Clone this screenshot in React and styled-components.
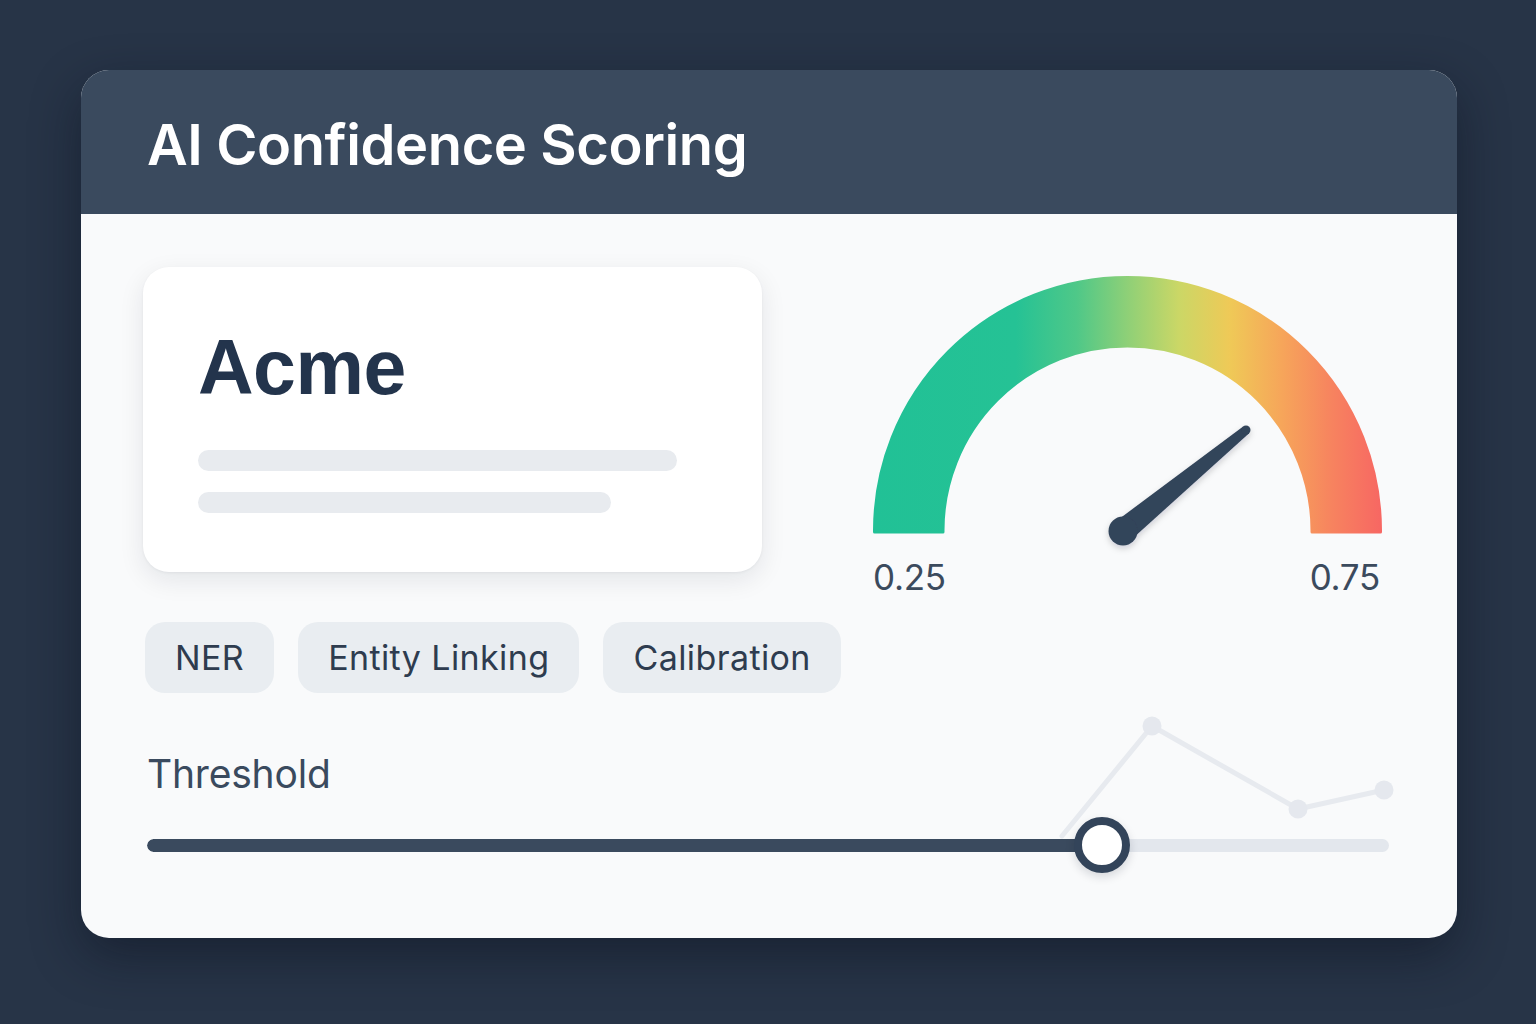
import React from "react";
import styled, { createGlobalStyle } from "styled-components";

const Global = createGlobalStyle`
  html, body { margin: 0; padding: 0; background: #273447; }
  body { font-family: Inter, "Noto Sans", "Liberation Sans", sans-serif; }
  * { box-sizing: border-box; }
`;

const Page = styled.div`
  width: 1536px;
  height: 1024px;
  padding: 70px 0 0 81px;
  background: #273447;
`;

const Card = styled.div`
  width: 1376px;
  height: 868px;
  border-radius: 28px;
  overflow: hidden;
  background: #f9fafb;
  box-shadow: 0 18px 50px rgba(8, 14, 26, 0.45);
  display: flex;
  flex-direction: column;
`;

const Header = styled.div`
  height: 144px;
  flex: 0 0 144px;
  background: #3a4a5e;
  display: flex;
  align-items: center;
  padding-left: 66px;
`;

const Title = styled.h1`
  margin: 0;
  font-family: Inter, sans-serif;
  font-weight: 600;
  font-size: 56px;
  letter-spacing: -0.4px;
  color: #ffffff;
  padding-top: 5px;
  white-space: nowrap;
`;

const Body = styled.div`
  flex: 1;
  padding: 53px 66px 0 62px;
`;

const TopRow = styled.div`
  display: grid;
  grid-template-columns: 619px 510px;
  column-gap: 111px;
`;

const LeftCol = styled.div`
  display: flex;
  flex-direction: column;
  min-width: 0;
`;

const EntityCard = styled.div`
  height: 305px;
  background: #ffffff;
  border-radius: 26px;
  box-shadow: 0 8px 26px rgba(15, 23, 42, 0.09), 0 1px 3px rgba(15, 23, 42, 0.05);
  padding: 56px 0 0 55px;
`;

const EntityName = styled.div`
  font-family: "Liberation Sans", Arial, sans-serif;
  font-weight: 700;
  font-size: 77px;
  line-height: 88px;
  color: #23344c;
  letter-spacing: -0.5px;
`;

const SkeletonLine = styled.div`
  height: 21px;
  border-radius: 11px;
  background: #e8ebef;
  width: ${(p) => p.$w}px;
  margin-top: ${(p) => p.$mt}px;
`;

const Chips = styled.div`
  display: flex;
  gap: 24px;
  margin-top: 50px;
  padding-left: 2px;
  width: max-content;
`;

const Chip = styled.div`
  flex: 0 0 auto;
  white-space: nowrap;
  height: 71px;
  padding: 0 30px;
  border-radius: 20px;
  background: #e9edf1;
  display: flex;
  align-items: center;
  font-family: Inter, sans-serif;
  font-size: 34px;
  font-weight: 400;
  color: #2e3c4f;
  letter-spacing: 0.4px;
`;

const GaugeCol = styled.div`
  padding-top: 9px;
  display: flex;
  flex-direction: column;
`;

const GaugeSvg = styled.svg`
  display: block;
  overflow: visible;
`;

const GaugeLabels = styled.div`
  display: flex;
  justify-content: space-between;
  margin-top: 23px;
  padding-right: 3px;
`;

const GaugeLabel = styled.span`
  font-family: Inter, sans-serif;
  font-size: 35px;
  line-height: 40px;
  color: #3b4a5d;
  letter-spacing: -0.3px;
`;

const ThresholdSection = styled.div`
  position: relative;
  margin: 59px 0 0 4px;
  width: 1242px;
`;

const ThresholdLabel = styled.div`
  position: relative;
  font-family: Inter, sans-serif;
  font-size: 39px;
  line-height: 44px;
  color: #3a4a5e;
  letter-spacing: -0.2px;
`;

const ChartSvg = styled.svg`
  position: absolute;
  left: 902px;
  top: -43px;
  overflow: visible;
`;

const Slider = styled.div`
  position: relative;
  height: 56px;
  margin-top: 21px;
  display: flex;
  align-items: center;
`;

const Track = styled.div`
  height: 13px;
  width: 100%;
  border-radius: 7px;
  background: #e3e7ed;
  overflow: hidden;
  display: flex;
`;

const Fill = styled.div`
  height: 100%;
  background: #3a4a5e;
  border-radius: 7px 0 0 7px;
`;

const Knob = styled.div`
  position: absolute;
  top: 0;
  width: 56px;
  height: 56px;
  margin-left: -28px;
  border-radius: 50%;
  border: 8px solid #33445a;
  background: #ffffff;
  box-shadow: 0 4px 10px rgba(15, 23, 42, 0.15);
`;

const chips = ["NER", "Entity Linking", "Calibration"];

function Gauge() {
  const cx = 254.5;
  const cy = 254.5;
  const R = 253;
  const r = 184.5;
  const pivot = { x: 250, y: 255 };
  const tip = { x: 373, y: 154 };
  const dx = tip.x - pivot.x;
  const dy = tip.y - pivot.y;
  const len = Math.hypot(dx, dy);
  const px = -dy / len;
  const py = dx / len;
  const bw = 12;
  const tw = 4.5;
  const needle = [
    [pivot.x + px * bw, pivot.y + py * bw],
    [tip.x + px * tw, tip.y + py * tw],
    [tip.x - px * tw, tip.y - py * tw],
    [pivot.x - px * bw, pivot.y - py * bw],
  ]
    .map((p) => p.join(","))
    .join(" ");
  const by = 256;
  return (
    <GaugeSvg width="510" height="258" viewBox="0 0 510 258">
      <defs>
        <linearGradient id="gaugeGrad" x1="0" y1="0" x2="510" y2="0" gradientUnits="userSpaceOnUse">
          <stop offset="0" stopColor="#21c196" />
          <stop offset="0.28" stopColor="#25c295" />
          <stop offset="0.4" stopColor="#4fc888" />
          <stop offset="0.5" stopColor="#8fd077" />
          <stop offset="0.6" stopColor="#cbd766" />
          <stop offset="0.7" stopColor="#efc957" />
          <stop offset="0.8" stopColor="#f6a65a" />
          <stop offset="0.9" stopColor="#f7835f" />
          <stop offset="1" stopColor="#f76663" />
        </linearGradient>
        <filter id="needleShadow" x="-50%" y="-50%" width="200%" height="200%">
          <feDropShadow dx="0" dy="3" stdDeviation="3" floodColor="#0f172a" floodOpacity="0.18" />
        </filter>
      </defs>
      <path
        d={`M ${cx - R} ${by} L ${cx - R} ${cy} A ${R} ${R} 0 0 1 ${cx + R} ${cy} L ${cx + R} ${by} L ${cx + r} ${by} L ${cx + r} ${cy} A ${r} ${r} 0 0 0 ${cx - r} ${cy} L ${cx - r} ${by} Z`}
        fill="url(#gaugeGrad)"
        stroke="url(#gaugeGrad)"
        strokeWidth="3"
        strokeLinejoin="round"
      />
      <g filter="url(#needleShadow)" fill="#33445a">
        <polygon points={needle} />
        <circle cx={pivot.x} cy={pivot.y} r="14.5" />
        <circle cx={tip.x} cy={tip.y} r={tw} />
      </g>
    </GaugeSvg>
  );
}

function Chart() {
  const pts = [
    [103, 17],
    [249, 100],
    [335, 81],
  ];
  return (
    <ChartSvg width="350" height="140" viewBox="0 0 350 140">
      <polyline
        points="13,127 103,17 249,100 335,81"
        fill="none"
        stroke="#e7eaef"
        strokeWidth="5"
        strokeLinejoin="round"
        strokeLinecap="round"
      />
      {pts.map(([x, y]) => (
        <circle key={x} cx={x} cy={y} r="9.5" fill="#e5e8ee" />
      ))}
    </ChartSvg>
  );
}

export default function App() {
  const sliderFill = 955;
  return (
    <Page>
      <Global />
      <Card>
        <Header>
          <Title>AI Confidence Scoring</Title>
        </Header>
        <Body>
          <TopRow>
            <LeftCol>
              <EntityCard>
                <EntityName>Acme</EntityName>
                <SkeletonLine $w={479} $mt={39} />
                <SkeletonLine $w={413} $mt={21} />
              </EntityCard>
              <Chips>
                {chips.map((c) => (
                  <Chip key={c}>{c}</Chip>
                ))}
              </Chips>
            </LeftCol>
            <GaugeCol>
              <Gauge />
              <GaugeLabels>
                <GaugeLabel>0.25</GaugeLabel>
                <GaugeLabel>0.75</GaugeLabel>
              </GaugeLabels>
            </GaugeCol>
          </TopRow>
          <ThresholdSection>
            <Chart />
            <ThresholdLabel>Threshold</ThresholdLabel>
            <Slider>
              <Track>
                <Fill style={{ width: sliderFill }} />
              </Track>
              <Knob style={{ left: sliderFill }} />
            </Slider>
          </ThresholdSection>
        </Body>
      </Card>
    </Page>
  );
}
